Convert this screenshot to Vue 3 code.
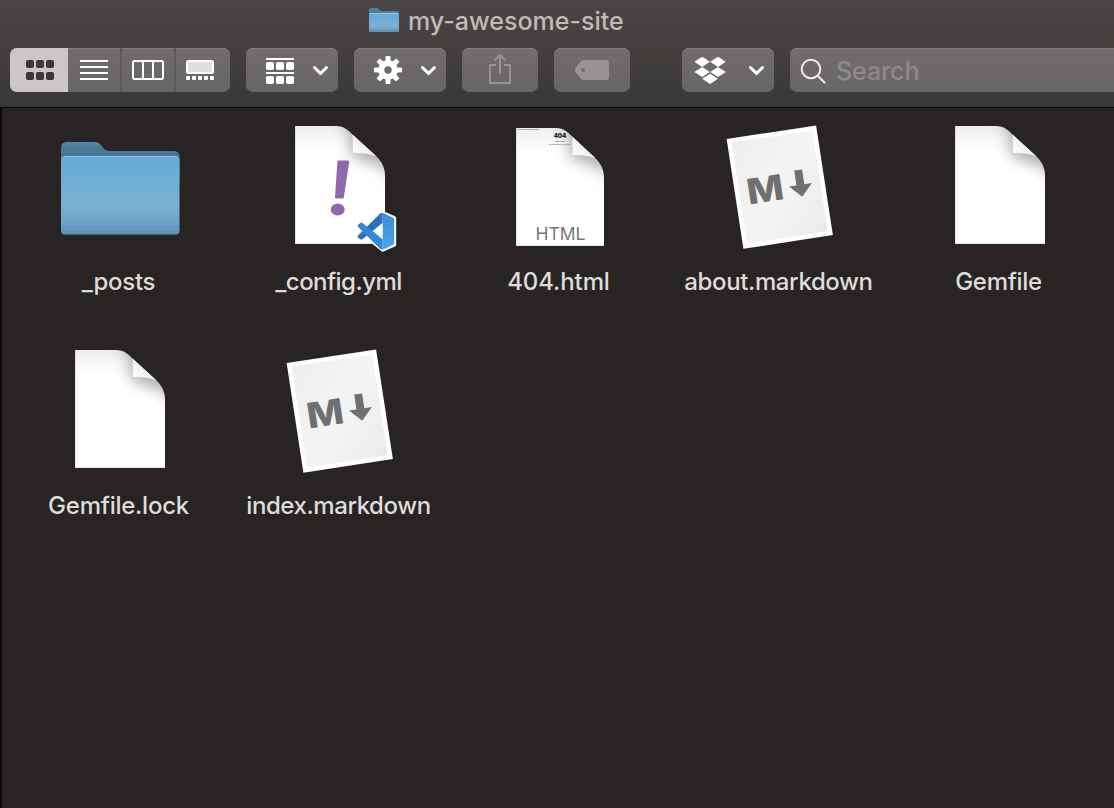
<script setup>
const files = [
  { name: '_posts', kind: 'folder', spacing: -0.25 },
  { name: '_config.yml', kind: 'yaml', spacing: -0.55 },
  { name: '404.html', kind: 'html', spacing: -0.1 },
  { name: 'about.markdown', kind: 'markdown', spacing: -0.38 },
  { name: 'Gemfile', kind: 'plain', spacing: -0.3 },
  { name: 'Gemfile.lock', kind: 'plain', spacing: -0.25 },
  { name: 'index.markdown', kind: 'markdown', spacing: -0.42 },
]
const gearTeeth = [0, 45, 90, 135, 180, 225, 270, 315]
</script>

<template>
  <div class="finder">
    <svg class="defs" width="0" height="0">
      <defs>
        <linearGradient id="front" x1="0" y1="0" x2="0" y2="1">
          <stop offset="0" stop-color="#66aad8" />
          <stop offset="0.65" stop-color="#7ab1d3" />
          <stop offset="0.86" stop-color="#6da4c6" />
          <stop offset="1" stop-color="#6299bb" />
        </linearGradient>
        <linearGradient id="back" x1="0" y1="0" x2="0" y2="1">
          <stop offset="0" stop-color="#5688a8" />
          <stop offset="0.15" stop-color="#4a7896" />
          <stop offset="1" stop-color="#4a7896" />
        </linearGradient>
        <linearGradient id="fold" x1="0" y1="1" x2="0.6" y2="0.4">
          <stop offset="0" stop-color="#ffffff" />
          <stop offset="1" stop-color="#ededed" />
        </linearGradient>
        <linearGradient id="topshade" x1="0" y1="0" x2="0" y2="1">
          <stop offset="0" stop-color="#000" stop-opacity="0.07" />
          <stop offset="1" stop-color="#000" stop-opacity="0" />
        </linearGradient>
        <linearGradient id="card" x1="0" y1="0" x2="1" y2="1">
          <stop offset="0" stop-color="#ededed" />
          <stop offset="0.5" stop-color="#f4f4f4" />
          <stop offset="1" stop-color="#ebebeb" />
        </linearGradient>
        <linearGradient id="panel" x1="0" y1="0" x2="0" y2="1">
          <stop offset="0" stop-color="#3a8fd4" />
          <stop offset="1" stop-color="#4ba5ee" />
        </linearGradient>
        <filter id="soft" x="-50%" y="-50%" width="200%" height="200%">
          <feGaussianBlur stdDeviation="7" />
        </filter>
        <clipPath id="pageclip">
          <path d="M19 4H60C68 4 72 8 77 13L100 34C106 40 109 46 109 54V122H19Z" />
        </clipPath>
      </defs>
      <symbol id="folder" viewBox="0 0 128 128">
        <path fill="url(#back)" d="M5 26Q5 20 11 20H39Q42 20 44 22L48 27Q50 29 53 29H118Q123.500 29 123.500 35V60H5Z" />
        <path fill="#3f6f8e" fill-opacity=".45" d="M5 31H123V38H5Z" />
        <rect x="5" y="34" width="118.500" height="78.500" rx="4" fill="url(#front)" />
        <path d="M8 34.500H121" stroke="#8fc6e8" stroke-width="1" />
        <path d="M5.500 104.500H123M5.500 107H123M5.500 109.500H123" stroke="#4f87ab" stroke-opacity=".5" />
        <path d="M7 112H121" stroke="#447a9d" />
      </symbol>
      <symbol id="page" viewBox="0 0 128 128">
        <g clip-path="url(#pageclip)">
          <path fill="#fff" d="M19 4H109V122H19Z" />
          <path fill="url(#topshade)" d="M19 4H109V29H19Z" />
          <path filter="url(#soft)" fill="#000" fill-opacity=".3" d="M56 -4L73 6L74 34L111 47V62L125 30L90 0Z" />
        </g>
        <path fill="url(#fold)" d="M76.500 12.500L100 34Q90 30.500 77 31Z" />
        <path d="M19.500 4V121.500H109" fill="none" stroke="#bbb" stroke-opacity=".4" />
      </symbol>
    </svg>

    <header class="chrome">
      <div class="title">
        <svg class="mini" viewBox="0 0 30 24">
          <path fill="#4f7f9f" d="M0 2Q0 0 2 0H9L12 3H28Q30 3 30 5V12H0Z" />
          <rect y="5" width="30" height="19" rx="1" fill="url(#front)" />
          <path d="M1 5.500H29" stroke="#8fc6e8" />
          <path d="M0 22.500H30" stroke="#5a92b5" />
        </svg>
        <span class="title-text">my-awesome-site</span>
      </div>

      <div class="toolbar">
        <div class="views">
          <div class="seg active">
            <svg width="28" height="20" fill="#3b3937">
              <rect v-for="i in 6" :key="i" :x="((i - 1) % 3) * 10" :y="i > 3 ? 12 : 0" width="8" height="8" rx="1.800" />
            </svg>
          </div>
          <div class="seg list">
            <svg width="28" height="20"><path d="M0 1H28M0 7H28M0 13H28M0 19H28" stroke="#fff" stroke-width="2" /></svg>
          </div>
          <div class="seg split">
            <svg width="32" height="20" fill="none" stroke="#fff" stroke-width="2">
              <rect x="1" y="1" width="30" height="18" rx="1.500" />
              <path d="M11 1V19M21 1V19" />
            </svg>
          </div>
          <div class="seg split gallery">
            <svg width="28" height="20">
              <rect x="1" y="1" width="26" height="12" rx="1.500" fill="#e2e0df" stroke="#fff" stroke-width="2" />
              <rect v-for="i in 5" :key="i" :x="(i - 1) * 6" y="16" width="4" height="4" rx="1" fill="#fff" />
            </svg>
          </div>
        </div>

        <div class="button">
          <svg width="92" height="44" fill="#fff">
            <path d="M20 10H48V12H20ZM20 24H48V26H20Z" />
            <rect v-for="i in 6" :key="i" :x="20 + ((i - 1) % 3) * 10" :y="i > 3 ? 28 : 14" width="8" height="8" rx="1.800" />
            <path class="chevron" d="M68.500 19.500L74.500 25.500L80.500 19.500" />
          </svg>
        </div>

        <div class="button">
          <svg width="92" height="44">
            <circle cx="34" cy="22" r="6.700" fill="none" stroke="#fff" stroke-width="6" />
            <path v-for="a in gearTeeth" :key="a" :transform="`rotate(${a} 34 22)`" fill="#fff" d="M31.200 14L31.700 8.500Q31.800 8 32.300 8H35.700Q36.200 8 36.300 8.500L36.800 14Z" />
            <path class="chevron" d="M68.500 19.500L74.500 25.500L80.500 19.500" />
          </svg>
        </div>

        <div class="button dim">
          <svg width="76" height="44" fill="none" stroke="#979493" stroke-width="2">
            <path d="M34 17H28V35H48V17H42M38 26V8M32.500 12.500L38 7L43.500 12.500" stroke-linejoin="round" />
          </svg>
        </div>

        <div class="button dim">
          <svg width="76" height="44">
            <path fill="#979493" fill-rule="evenodd" d="M30 12H52Q55 12 55 15V29Q55 32 52 32H30Q28 32 26.500 30.500L21.500 24Q20.200 22 21.500 20L26.500 13.500Q28 12 30 12ZM29 20A2 2 0 1 0 29 24A2 2 0 1 0 29 20Z" />
          </svg>
        </div>

        <div class="button dropbox">
          <svg width="92" height="44" fill="#fff">
            <path d="M20.200 8.700L28 13.800L20.200 19L12.400 13.800ZM36 8.700L43.800 13.800L36 19L28.200 13.800ZM20.200 19L28 24L20.200 29L12.400 24ZM36 19L43.800 24L36 29L28.200 24ZM28.100 25.800L36 30.700L28.100 36L20.200 30.700Z" />
            <path class="chevron" d="M68.500 19.500L74.500 25.500L80.500 19.500" />
          </svg>
        </div>

        <div class="search">
          <svg width="46" height="44" fill="none" stroke="#eceaea" stroke-width="2">
            <circle cx="21" cy="21" r="9.300" />
            <path d="M27.700 27.700L35 35" />
          </svg>
          <span>Search</span>
        </div>
      </div>
    </header>

    <main class="files">
      <div v-for="f in files" :key="f.name" class="file">
        <svg class="icon" viewBox="0 0 128 128">
          <use v-if="f.kind === 'folder'" href="#folder" />
          <use v-if="f.kind === 'plain'" href="#page" />
          <g v-if="f.kind === 'yaml'">
            <use href="#page" />
            <path fill="#8c6bab" d="M62.500 38.500H72Q73.300 38.500 73.200 40L67.800 75.500Q67.500 76.500 66.500 76.500H60Q59 76.500 59 75.500L61.400 39.500Q61.500 38.500 62.500 38.500Z" />
            <ellipse cx="61.700" cy="87.500" rx="7" ry="6" fill="#8c6bab" />
            <g stroke-linejoin="round" transform="translate(-.8 -.8)">
              <path fill="#fff" stroke="#fff" stroke-width="4" d="M83 103L86 101L91 104.500L107.500 92L119 97V123.500L107.500 128.500L91 115L86 118.500L83 116L88 110Z" />
              <path fill="#2b72b9" d="M107.500 91.500V101.500L87 118.200Q86 118.700 85 118L82.700 116Q82 115 83 114L105 92.300Z" />
              <path fill="#3389d3" d="M107.500 128.500V118L87 101.500Q86 101 85 101.700L82.700 103.700Q82 104.700 83 105.700L105 127.700Z" />
              <path fill="url(#panel)" d="M107.500 91.500L118 96.500Q119 97 119 98.500V121.500Q119 123 118 123.500L107.500 128.500Z" />
            </g>
          </g>
          <g v-if="f.kind === 'html'">
            <use href="#page" transform="translate(1.400 2) scale(.978 1)" />
            <text class="web" x="64.500" y="117.500">HTML</text>
            <text class="tiny" x="64" y="15.500">404</text>
            <path d="M22 7.500H43" stroke="#888" stroke-width=".7" stroke-dasharray="2 .4" />
            <path d="M59 19.500H69M53 22.500H75" stroke="#999" stroke-width=".8" stroke-dasharray="2 .4" />
          </g>
          <g v-if="f.kind === 'markdown'" transform="rotate(-8.700 63.700 65.100)">
            <rect x="18.500" y="9.600" width="90.500" height="111" fill="#fff" />
            <rect x="23" y="14" width="81.500" height="102" fill="url(#card)" />
            <text class="mark" x="30.500" y="77.500" textLength="37" lengthAdjust="spacingAndGlyphs">M</text>
            <path fill="#6f6f6f" d="M80.500 51H88.500V66H96L84.500 78L73 66H80.500Z" />
          </g>
        </svg>
        <span class="label" :style="{ letterSpacing: f.spacing + 'px' }">{{ f.name }}</span>
      </div>
    </main>
  </div>
</template>

<style scoped>
.finder {
  width: 1114px;
  height: 808px;
  display: flex;
  flex-direction: column;
  overflow: hidden;
  background: #282424;
  font-family: Inter, "Liberation Sans", sans-serif;
}
.defs { position: absolute; }
.chrome {
  box-sizing: border-box;
  height: 108px;
  flex: none;
  border-bottom: 1px solid #000;
  background: linear-gradient(#4a4544, #393836);
}
.title {
  height: 48px;
  padding-left: 369px;
  display: flex;
  align-items: flex-start;
  box-sizing: border-box;
}
.mini { width: 30px; height: 24px; margin: 8px 9px 0 0; }
.title-text {
  font-size: 25px;
  font-weight: 500;
  line-height: 30px;
  margin-top: 6px;
  color: #bfbbb9;
  white-space: nowrap;
}
.toolbar { display: flex; gap: 16px; padding-left: 10px; }
.toolbar svg { display: block; flex: none; }
.views, .button, .search {
  height: 44px;
  flex: none;
  box-sizing: border-box;
  border-radius: 7px;
  background: linear-gradient(#706d6c, #686665);
  box-shadow: inset 0 1px #817e7d;
  overflow: hidden;
}
.views { display: flex; width: 220px; }
.seg { width: 52px; height: 44px; display: flex; align-items: center; justify-content: center; }
.seg.active { width: 58px; background: #cac7c6; box-sizing: border-box; padding-left: 2px; }
.seg.split { border-left: 2px solid #5d5b5a; }
.seg.gallery { box-sizing: border-box; width: 56px; padding-right: 6px; }
.chevron { fill: none; stroke: #fff; stroke-width: 3px; stroke-linecap: round; stroke-linejoin: round; }
.dropbox { margin-left: 36px; }
.search {
  width: 340px;
  display: flex;
  align-items: center;
  font-size: 25px;
  font-weight: 500;
  letter-spacing: -0.1px;
  color: #8d8a89;
}
.search span { padding-top: 2px; }
.files {
  flex: 1;
  box-sizing: border-box;
  border-left: 2px solid #0a0909;
  padding: 14px 0 0 8px;
  display: grid;
  grid-template-columns: repeat(5, 220px);
  grid-auto-rows: 224px;
}
.file { display: flex; flex-direction: column; align-items: center; }
.icon { width: 128px; height: 128px; overflow: visible; display: block; flex: none; }
.label {
  margin: 17px 3px 0 0;
  font-size: 24px;
  font-weight: 500;
  line-height: 30px;
  color: #dddcdb;
  white-space: nowrap;
}
.web { font: 17.5px Inter, sans-serif; fill: #777; text-anchor: middle; }
.tiny { font: 900 6px Inter, sans-serif; fill: #222; text-anchor: middle; }
.mark { font: 800 35px Inter, sans-serif; fill: #6f6f6f; }
</style>

<style>
body { background: #282424; overflow: hidden; }
</style>
